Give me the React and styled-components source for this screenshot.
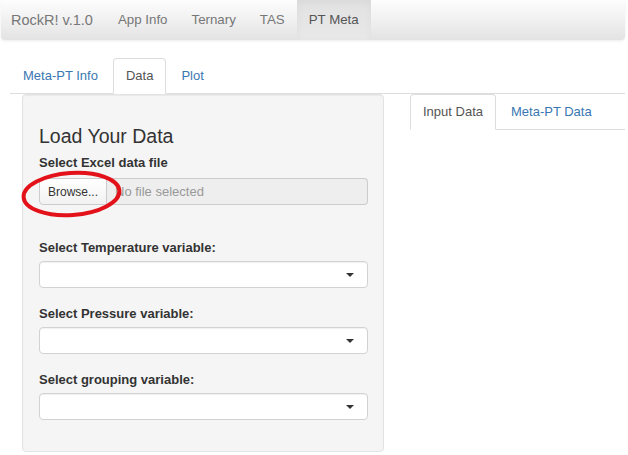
import React from "react";
import styled, { createGlobalStyle } from "styled-components";

const GlobalStyle = createGlobalStyle`
  html, body { margin: 0; padding: 0; background: #fff; }
  body {
    font-family: "Liberation Sans", Arial, sans-serif;
    font-size: 13px;
    color: #333;
  }
  * { box-sizing: border-box; }
`;

const Navbar = styled.nav`
  display: flex;
  height: 40px;
  margin: 0 3px 0 1px;
  background: linear-gradient(to bottom, #fdfdfd 0%, #f3f3f3 40%, #e3e3e3 100%);
  border-radius: 0 0 4px 4px;
  box-shadow: 0 1px 3px rgba(0, 0, 0, 0.08);
`;

const Brand = styled.span`
  padding: 0 13px 0 10px;
  font-size: 14.5px;
  line-height: 40px;
  color: #777;
`;

const NavLink = styled.span`
  padding: 0 12px;
  font-size: 13.3px;
  line-height: 40px;
  color: ${(p) => (p.$active ? "#555" : "#777")};
  background: ${(p) => (p.$active ? "linear-gradient(to bottom, #e2e2e2, #e8e8e8)" : "transparent")};
  box-shadow: ${(p) => (p.$active ? "inset 0 3px 9px rgba(0,0,0,0.04)" : "none")};
`;

const Page = styled.div`
  padding: 18px 3px 0 10px;
`;

const TabList = styled.div`
  display: flex;
  border-bottom: 1px solid #ddd;
`;

const Tab = styled.span`
  padding: 8px 12px;
  margin-right: 2px;
  margin-bottom: -1px;
  line-height: 18px;
  font-size: 13px;
  border: 1px solid transparent;
  border-radius: 4px 4px 0 0;
  color: ${(p) => (p.$active ? "#555" : "#3a77b2")};
  background: ${(p) => (p.$active ? "#fff" : "transparent")};
  border-color: ${(p) => (p.$active ? "#ddd #ddd transparent" : "transparent")};
`;

const Content = styled.div`
  display: flex;
  align-items: flex-start;
  gap: 26px;
  padding-left: 12px;
`;

const Well = styled.div`
  width: 362px;
  flex: none;
  background: #f5f5f5;
  border: 1px solid #e3e3e3;
  border-radius: 4px;
  padding: 30px 15px 31px 16px;
  box-shadow: inset 0 1px 1px rgba(0, 0, 0, 0.05);
`;

const Heading = styled.h3`
  margin: 0 0 7px;
  font-size: 19.5px;
  line-height: 22px;
  font-weight: normal;
  color: #333;
`;

const Group = styled.div`
  margin-bottom: ${(p) => p.$mb}px;
`;

const Label = styled.label`
  display: block;
  font-weight: bold;
  font-size: 13px;
  line-height: 18px;
  color: #333;
  margin-bottom: ${(p) => p.$mb}px;
`;

const FileRow = styled.div`
  position: relative;
  display: flex;
  height: 27px;
`;

const BrowseButton = styled.span`
  width: 68px;
  display: flex;
  align-items: center;
  justify-content: center;
  font-size: 12px;
  color: #333;
  background: linear-gradient(to bottom, #fff, #f2f2f2);
  border: 1px solid #ccc;
  border-radius: 4px 0 0 4px;
`;

const FileName = styled.div`
  flex: 1;
  display: flex;
  align-items: center;
  padding-left: 8px;
  background: #eee;
  border: 1px solid #ccc;
  border-left: none;
  border-radius: 0 4px 4px 0;
  color: #999;
  font-size: 13px;
`;

const Annotation = styled.svg`
  position: absolute;
  left: -19px;
  top: -8px;
  width: 104px;
  height: 48px;
  overflow: visible;
  pointer-events: none;
`;

const Select = styled.div`
  height: 27px;
  display: flex;
  align-items: center;
  justify-content: flex-end;
  padding-right: 13px;
  background: #fff;
  border: 1px solid #d2d2d2;
  border-radius: 4px;
  box-shadow: inset 0 1px 1px rgba(0, 0, 0, 0.06);
`;

const Caret = styled.span`
  width: 0;
  height: 0;
  border-left: 4px solid transparent;
  border-right: 4px solid transparent;
  border-top: 4px solid #333;
`;

const Main = styled.div`
  flex: 1;
`;

const selects = [
  "Select Temperature variable:",
  "Select Pressure variable:",
  "Select grouping variable:",
];

export default function App() {
  return (
    <>
      <GlobalStyle />
      <Navbar>
        <Brand>RockR! v.1.0</Brand>
        <NavLink>App Info</NavLink>
        <NavLink>Ternary</NavLink>
        <NavLink>TAS</NavLink>
        <NavLink $active>PT Meta</NavLink>
      </Navbar>
      <Page>
        <TabList>
          <Tab>Meta-PT Info</Tab>
          <Tab $active>Data</Tab>
          <Tab>Plot</Tab>
        </TabList>
        <Content>
          <Well>
            <Heading>Load Your Data</Heading>
            <Group $mb={34}>
              <Label $mb={6}>Select Excel data file</Label>
              <FileRow>
                <BrowseButton>Browse...</BrowseButton>
                <FileName>No file selected</FileName>
                <Annotation viewBox="0 0 104 48">
                  <ellipse
                    cx="51.5"
                    cy="24"
                    rx="48"
                    ry="21"
                    fill="none"
                    stroke="#e3121a"
                    strokeWidth="4"
                    transform="rotate(-4 51.5 24)"
                  />
                </Annotation>
              </FileRow>
            </Group>
            {selects.map((s, i) => (
              <Group key={s} $mb={i < selects.length - 1 ? 17 : 0}>
                <Label $mb={4}>{s}</Label>
                <Select>
                  <Caret />
                </Select>
              </Group>
            ))}
          </Well>
          <Main>
            <TabList>
              <Tab $active>Input Data</Tab>
              <Tab>Meta-PT Data</Tab>
            </TabList>
          </Main>
        </Content>
      </Page>
    </>
  );
}
